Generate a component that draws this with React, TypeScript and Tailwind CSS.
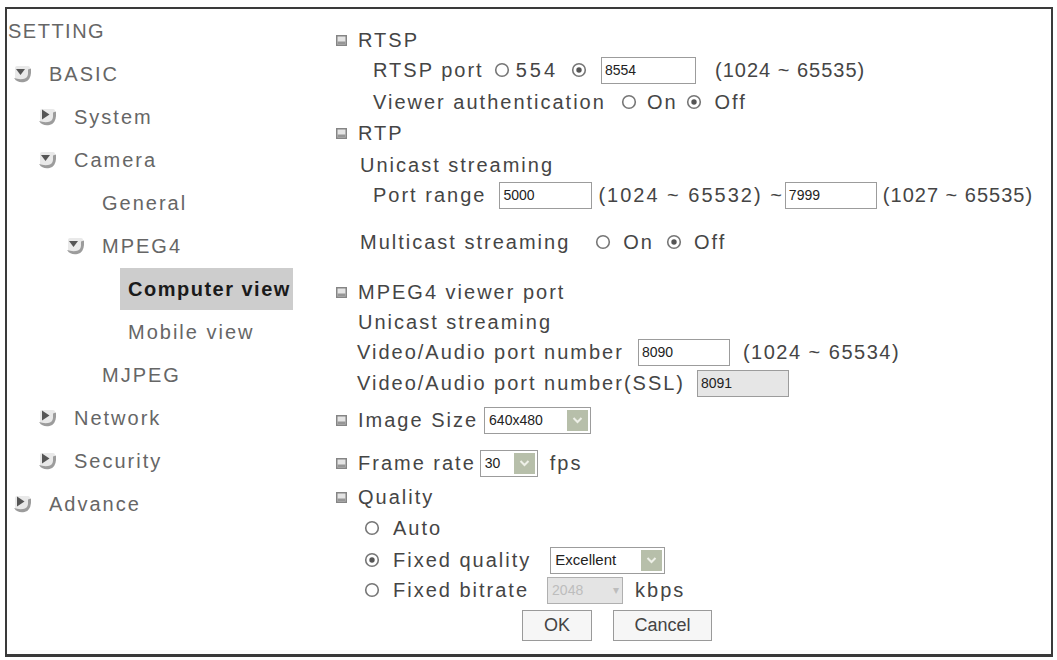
import React from "react";

const TreeIcon = ({ open }: { open: boolean }) => (
  <svg width="21" height="20" viewBox="0 0 21 20" className="shrink-0">
    <path d="M3 4 Q3 2 5 2 L16 2 Q18 2 18 4 L18 12 Q18 17 12 17 L5 17 Q3 17 3 15 Z" fill="#e9e9e9" />
    <path d="M2 14 Q6 19.5 12.5 18 Q18.5 16.5 19 9 L19 4.5 L16 5.5 L16 10 Q15.5 14.5 11 15 Q6 15.5 2 14 Z" fill="#9c9c9c" />
    {open ? (
      <path d="M4 5 L13 5 L8.5 11 Z" fill="#555" />
    ) : (
      <path d="M5 2.5 L12.5 7.5 L5 12.5 Z" fill="#555" />
    )}
  </svg>
);

const SectionIcon = () => (
  <svg width="11" height="11" viewBox="0 0 11 11" className="shrink-0">
    <rect x="0.75" y="0.75" width="9.5" height="9.5" fill="#e4e4e4" stroke="#858585" strokeWidth="1.5" />
    <rect x="1.5" y="6.5" width="8" height="3" fill="#969696" />
  </svg>
);

const Radio = ({ checked }: { checked?: boolean }) => (
  <svg width="16" height="16" viewBox="0 0 16 16" className="shrink-0">
    <circle cx="8" cy="8" r="6.3" fill="#fff" stroke="#767676" strokeWidth="1.6" />
    {checked && <circle cx="8" cy="8" r="2.7" fill="#555" />}
  </svg>
);

const DropBtn = () => (
  <div className="w-[21px] h-[21px] bg-[#b7bfaa] flex items-center justify-center shrink-0">
    <svg width="11" height="8" viewBox="0 0 11 8">
      <path d="M1.5 2 L5.5 6 L9.5 2" fill="none" stroke="#eef0e8" strokeWidth="2" />
    </svg>
  </div>
);

const Input = ({ value, w, gray }: { value: string; w: string; gray?: boolean }) => (
  <div
    className={`${w} h-[27px] border border-[#9c9c9c] ${gray ? "bg-[#e6e6e6]" : "bg-white"} flex items-center pl-[3px] text-[14px] tracking-normal text-[#222]`}
  >
    {value}
  </div>
);

const row = "h-[30px] flex items-center";

export default function App() {
  return (
    <div
      className="w-[1057px] h-[660px] bg-white overflow-hidden pt-[7px] pl-[5px]"
      style={{ fontFamily: '"Liberation Sans", Arial, sans-serif' }}
    >
      <div className="w-[1048px] h-[650px] border-2 border-b-[3px] border-[#3a3a3a] flex text-[20px] tracking-[2px]">
        {/* Sidebar */}
        <div className="w-[329px] shrink-0 flex flex-col text-[#666]">
          <div className="h-[43px] flex items-center pl-[1px] tracking-[1.5px]">SETTING</div>
          <div className="h-[43px] flex items-center pl-[5px] gap-[16px]">
            <TreeIcon open />
            <span>BASIC</span>
          </div>
          <div className="h-[43px] flex items-center pl-[30px] gap-[16px]">
            <TreeIcon open={false} />
            <span>System</span>
          </div>
          <div className="h-[43px] flex items-center pl-[30px] gap-[16px]">
            <TreeIcon open />
            <span>Camera</span>
          </div>
          <div className="h-[43px] flex items-center pl-[95px]">General</div>
          <div className="h-[43px] flex items-center pl-[58px] gap-[16px]">
            <TreeIcon open />
            <span>MPEG4</span>
          </div>
          <div className="h-[43px] flex items-center pl-[113px]">
            <div className="w-[173px] h-[42px] bg-[#cdcdcd] flex items-center pl-[8px] font-bold text-[#1a1a1a] tracking-[1.5px]">
              Computer view
            </div>
          </div>
          <div className="h-[43px] flex items-center pl-[121px]">Mobile view</div>
          <div className="h-[43px] flex items-center pl-[95px]">MJPEG</div>
          <div className="h-[43px] flex items-center pl-[30px] gap-[16px]">
            <TreeIcon open={false} />
            <span>Network</span>
          </div>
          <div className="h-[43px] flex items-center pl-[30px] gap-[16px]">
            <TreeIcon open={false} />
            <span>Security</span>
          </div>
          <div className="h-[43px] flex items-center pl-[5px] gap-[16px]">
            <TreeIcon open={false} />
            <span>Advance</span>
          </div>
        </div>

        {/* Content */}
        <div className="flex-1 flex flex-col pt-[16px] text-[#454545]">
          <div className={`${row} gap-[11px]`}>
            <SectionIcon />
            <span>RTSP</span>
          </div>
          <div className={`${row} pl-[37px]`}>
            <span>RTSP port</span>
            <span className="ml-[10px]"><Radio /></span>
            <span className="ml-[6px] tracking-[3px]">554</span>
            <span className="ml-[13px]"><Radio checked /></span>
            <span className="ml-[14px]"><Input value="8554" w="w-[95px]" /></span>
            <span className="ml-[19px] tracking-[1px]">(1024 ~ 65535)</span>
          </div>
          <div className={`${row} pl-[37px] mt-[2px]`}>
            <span>Viewer authentication</span>
            <span className="ml-[15px]"><Radio /></span>
            <span className="ml-[10px]">On</span>
            <span className="ml-[8px]"><Radio checked /></span>
            <span className="ml-[13px]">Off</span>
          </div>
          <div className={`${row} gap-[11px] mt-[1px]`}>
            <SectionIcon />
            <span>RTP</span>
          </div>
          <div className={`${row} pl-[24px] mt-[2px]`}>Unicast streaming</div>
          <div className={`${row} pl-[37px]`}>
            <span>Port range</span>
            <span className="ml-[13px]"><Input value="5000" w="w-[93px]" /></span>
            <span className="ml-[6px]">(1024 ~ 65532) ~</span>
            <span className="ml-[1px]"><Input value="7999" w="w-[92px]" /></span>
            <span className="ml-[6px] tracking-[1px]">(1027 ~ 65535)</span>
          </div>
          <div className={`${row} pl-[24px] mt-[17px]`}>
            <span>Multicast streaming</span>
            <span className="ml-[25px]"><Radio /></span>
            <span className="ml-[12px]">On</span>
            <span className="ml-[12px]"><Radio checked /></span>
            <span className="ml-[12px]">Off</span>
          </div>
          <div className={`${row} gap-[11px] mt-[20px]`}>
            <SectionIcon />
            <span>MPEG4 viewer port</span>
          </div>
          <div className={`${row} pl-[22px]`}>Unicast streaming</div>
          <div className={`${row} pl-[21px]`}>
            <span>Video/Audio port number</span>
            <span className="ml-[14px]"><Input value="8090" w="w-[92px]" /></span>
            <span className="ml-[13px] tracking-[1.5px]">(1024 ~ 65534)</span>
          </div>
          <div className={`${row} pl-[21px] mt-[1px]`}>
            <span>Video/Audio port number(SSL)</span>
            <span className="ml-[12px]"><Input value="8091" w="w-[92px]" gray /></span>
          </div>
          <div className={`${row} gap-[11px] mt-[7px]`}>
            <SectionIcon />
            <span>Image Size</span>
            <div className="ml-[-5px] w-[107px] h-[27px] border border-[#9c9c9c] bg-white flex items-center justify-between pl-[4px] pr-[2px] text-[14px] tracking-normal text-[#222]">
              <span>640x480</span>
              <DropBtn />
            </div>
          </div>
          <div className={`${row} gap-[11px] mt-[13px]`}>
            <SectionIcon />
            <span>Frame rate</span>
            <div className="ml-[-7px] w-[58px] h-[27px] border border-[#9c9c9c] bg-white flex items-center justify-between pl-[4px] pr-[2px] text-[14px] tracking-normal text-[#222]">
              <span>30</span>
              <DropBtn />
            </div>
            <span className="ml-[1px]">fps</span>
          </div>
          <div className={`${row} gap-[11px] mt-[4px]`}>
            <SectionIcon />
            <span>Quality</span>
          </div>
          <div className={`${row} pl-[28px] mt-[1px]`}>
            <Radio />
            <span className="ml-[13px]">Auto</span>
          </div>
          <div className={`${row} pl-[28px] mt-[2px]`}>
            <Radio checked />
            <span className="ml-[13px]">Fixed quality</span>
            <div className="ml-[19px] w-[115px] h-[27px] border border-[#9c9c9c] bg-white flex items-center justify-between pl-[4px] pr-[2px] text-[15px] tracking-normal text-[#222]">
              <span>Excellent</span>
              <DropBtn />
            </div>
          </div>
          <div className={`${row} pl-[28px]`}>
            <Radio />
            <span className="ml-[13px]">Fixed bitrate</span>
            <div className="ml-[18px] w-[76px] h-[27px] border border-[#b0b0b0] bg-[#e4e4e4] flex items-center justify-between pl-[4px] pr-[3px] text-[14px] tracking-normal text-[#bdbdbd]">
              <span>2048</span>
              <span className="text-[12px]">▾</span>
            </div>
            <span className="ml-[12px]">kbps</span>
          </div>
          <div className="h-[31px] flex items-center mt-[5px] pl-[186px] tracking-normal text-[18px] text-[#444]">
            <button className="w-[70px] h-[31px] border border-[#9a9a9a] bg-[#f6f6f6] flex items-center justify-center">OK</button>
            <button className="ml-[21px] w-[99px] h-[31px] border border-[#9a9a9a] bg-[#f6f6f6] flex items-center justify-center">Cancel</button>
          </div>
        </div>
      </div>
    </div>
  );
}
